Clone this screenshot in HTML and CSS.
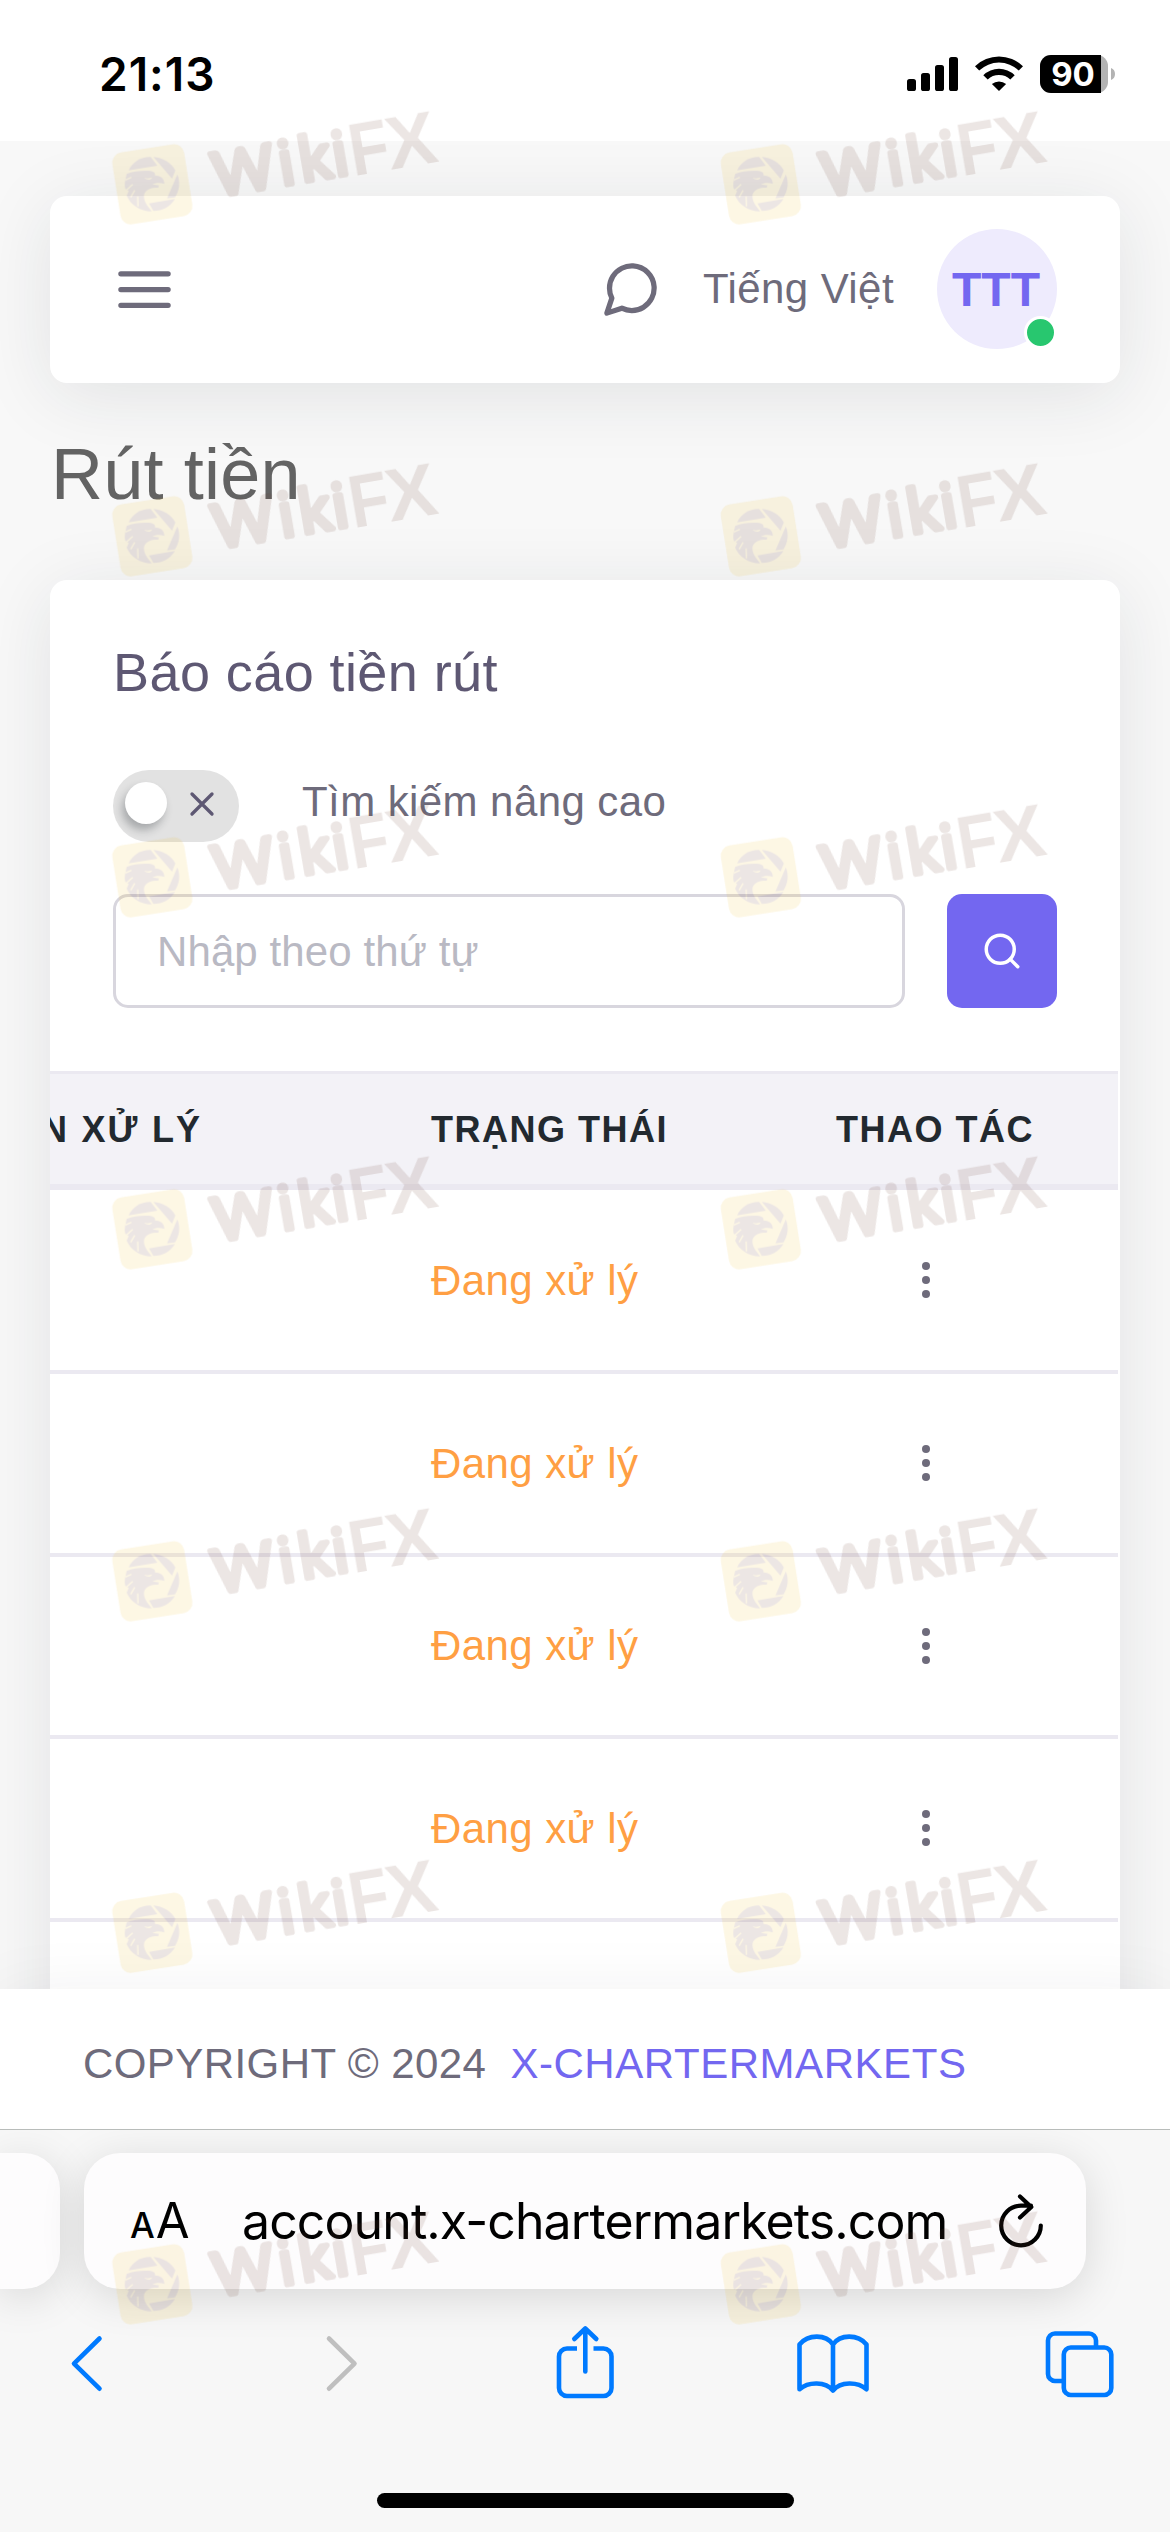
FILE: index.html
```html
<!DOCTYPE html>
<html lang="vi">
<head>
<meta charset="utf-8">
<title>Rút tiền</title>
<link rel="stylesheet" href="styles.css">
</head>
<body>
<header class="statusbar">
  <span class="clock">21:13</span>
  <svg class="status-icons" viewBox="900 50 220 48">
    <rect x="907" y="79" width="9" height="12" rx="2.6"/>
    <rect x="921" y="73" width="9" height="18" rx="2.6"/>
    <rect x="935" y="65" width="9" height="26" rx="2.6"/>
    <rect x="949" y="57" width="9" height="34" rx="2.6"/>
    <path d="M975 66.300a34.500 34.500 0 0 1 48 0l-4.200 4.300a28.500 28.500 0 0 0-39.600 0zM983.300 75.200a22.500 22.500 0 0 1 31.400 0l-4.400 4.300a16.500 16.500 0 0 0-22.600 0zM991.900 84a11 11 0 0 1 14.200 0L999 91z"/>
    <rect x="1040" y="55" width="68" height="38" rx="11" fill="#b3b3b3"/>
    <path d="M1051 55h50v38h-50a11 11 0 0 1-11-11V66a11 11 0 0 1 11-11z"/>
    <path d="M1111 68a6.500 6.500 0 0 1 0 12z" fill="#b3b3b3"/>
    <text class="battery-level" x="1073" y="86" text-anchor="middle">90</text>
  </svg>
</header>

<main class="page">
  <nav class="navbar">
    <svg class="icon-nav" viewBox="0 0 24 24"><path d="M3 12h18M3 6h18M3 18h18"/></svg>
    <div class="nav-right">
      <svg class="icon-nav" viewBox="0 0 24 24"><path d="M21 11.500a8.380 8.380 0 0 1-.9 3.800 8.500 8.500 0 0 1-7.600 4.700 8.380 8.380 0 0 1-3.800-.9L3 21l1.900-5.700a8.380 8.380 0 0 1-.9-3.800 8.500 8.500 0 0 1 4.700-7.600 8.380 8.380 0 0 1 3.800-.9h.5a8.480 8.480 0 0 1 8 8v.5z"/></svg>
      <span class="language">Tiếng Việt</span>
      <div class="avatar">TTT<i class="online"></i></div>
    </div>
  </nav>

  <h1 class="page-title">Rút tiền</h1>

  <section class="card">
    <h2 class="card-title">Báo cáo tiền rút</h2>
    <div class="advanced">
      <div class="switch">
        <i class="knob"></i>
        <svg class="icon-x" viewBox="0 0 24 24"><path d="M18 6L6 18M6 6l12 12"/></svg>
      </div>
      <span class="switch-label">Tìm kiếm nâng cao</span>
    </div>
    <div class="search">
      <input class="search-input" type="text" placeholder="Nhập theo thứ tự">
      <button class="search-button"><svg class="icon-search" viewBox="0 0 24 24"><circle cx="11" cy="11" r="8"/><path d="M21 21l-4.350-4.350"/></svg></button>
    </div>
    <div class="table">
      <div class="row head"><span class="cut">N XỬ LÝ</span><span>TRẠNG THÁI</span><span>THAO TÁC</span></div>
      <div class="row first"><span></span><span>Đang xử lý</span><svg class="icon-more" viewBox="0 0 24 24"><circle cx="12" cy="5" r="2"/><circle cx="12" cy="12" r="2"/><circle cx="12" cy="19" r="2"/></svg></div>
      <div class="row"><span></span><span>Đang xử lý</span><svg class="icon-more" viewBox="0 0 24 24"><circle cx="12" cy="5" r="2"/><circle cx="12" cy="12" r="2"/><circle cx="12" cy="19" r="2"/></svg></div>
      <div class="row"><span></span><span>Đang xử lý</span><svg class="icon-more" viewBox="0 0 24 24"><circle cx="12" cy="5" r="2"/><circle cx="12" cy="12" r="2"/><circle cx="12" cy="19" r="2"/></svg></div>
      <div class="row"><span></span><span>Đang xử lý</span><svg class="icon-more" viewBox="0 0 24 24"><circle cx="12" cy="5" r="2"/><circle cx="12" cy="12" r="2"/><circle cx="12" cy="19" r="2"/></svg></div>
    </div>
  </section>
</main>

<footer class="footer"><span>COPYRIGHT © 2024</span><a class="brand">X-CHARTERMARKETS</a></footer>

<div class="browser">
  <div class="tabs">
    <div class="tab-prev"></div>
    <div class="address">
      <span class="aa"><small>A</small>A</span>
      <span class="url">account.x-chartermarkets.com</span>
      <svg class="icon-reload" viewBox="994 2188 52 62"><path d="M1039.800 2223.500a19.800 19.800 0 1 1-19.800-19.800h10M1019 2194.500l11.300 10.500-11.300 10.500"/></svg>
    </div>
  </div>
  <div class="toolbar">
    <svg class="tool" viewBox="46 2322 80 80"><path d="M99.500 2338.500L74 2363.700l25.500 25"/></svg>
    <svg class="tool disabled" viewBox="294.500 2322 80 80"><path d="M328.500 2338.500l25.500 25.200-25.500 25"/></svg>
    <svg class="tool" viewBox="543 2322 80 80"><path d="M585.300 2371.500V2329M574.300 2339l11-10.500 11 10.500"/><path stroke-linecap="butt" d="M577 2348.500h-10a8 8 0 0 0-8 8v31.500a8 8 0 0 0 8 8h36.500a8 8 0 0 0 8-8v-31.500a8 8 0 0 0-8-8h-10"/></svg>
    <svg class="tool" viewBox="791.500 2322 80 80"><path d="M832.500 2344.500c-7-10.500-25-10.500-33.500 0V2389.300c9-8 26-8 33.500 1.200c7.500-9.200 24.500-9.200 33.500-1.200V2344.500c-8.500-10.500-26.500-10.500-33.500 0v46"/></svg>
    <svg class="tool" viewBox="1040 2322 80 80"><rect x="1063.800" y="2347.500" width="47.500" height="47.500" rx="7"/><path stroke-linecap="butt" d="M1096 2347v-6.500a7 7 0 0 0-7-7h-34a7 7 0 0 0-7 7v33.500a7 7 0 0 0 7 7h8"/></svg>
  </div>
  <div class="home"></div>
</div>

<svg class="watermarks" viewBox="0 0 1170 2532">
  <defs>
    <g id="mark" transform="scale(.33333)">
      <rect x="48" y="195" width="218" height="218" rx="31" fill="#f0c130" transform="rotate(-9 157 304)"/>
      <g fill="#6d3f30">
        <path d="M86 262C98 236 124 221 152 222L172 248z"/>
        <path d="M160 222C188 224 212 238 226 262L216 287z"/>
        <path d="M232 274C242 298 238 322 225 343L201 346z"/>
        <path d="M147 361L225 348C210 372 188 384 160 384z"/>
        <path d="M80 273C100 264 130 262 152 264C162 266 166 270 165 277C180 277 193 285 193 303C180 297 165 300 157 304L178 307C173 310 179 313 172 314C154 314 137 318 132 336C130 356 142 368 155 385C120 385 92 366 80 338L86 324L76 318C72 304 76 292 80 273zM132 284C140 292 152 292 157 283L143 286z"/>
      </g>
      <path d="M76 291L94 283M78 322L98 304M92 343L104 322M114 370L113 340" stroke="#f0c130" stroke-width="4" fill="none"/>
      <g transform="translate(378 344) rotate(-9.700)" fill="#6d3f30" class="mark-text">
        <text class="mark-soft" stroke="#6d3f30" y="-8" x="-28 172 233 335"><tspan class="mark-w">W</tspan>iki</text>
        <text class="mark-bold" x="388" textLength="119" lengthAdjust="spacingAndGlyphs">F</text>
        <text class="mark-bold" x="501">X</text>
      </g>
    </g>
  </defs>
  <g opacity=".13">
    <use href="#mark" x="100" y="83"/><use href="#mark" x="708.500" y="83"/>
    <use href="#mark" x="100" y="435"/><use href="#mark" x="708.500" y="435"/>
    <use href="#mark" x="100" y="776"/><use href="#mark" x="708.500" y="776"/>
    <use href="#mark" x="100" y="1128"/><use href="#mark" x="708.500" y="1128"/>
    <use href="#mark" x="100" y="1480"/><use href="#mark" x="708.500" y="1480"/>
    <use href="#mark" x="100" y="1831.500"/><use href="#mark" x="708.500" y="1831.500"/>
    <use href="#mark" x="100" y="2183"/><use href="#mark" x="708.500" y="2183"/>
  </g>
</svg>
</body>
</html>
```
FILE: styles.css
```css
* { box-sizing: border-box; }
body {
  margin: 0;
  width: 1170px;
  height: 2532px;
  overflow: hidden;
  position: relative;
  display: flex;
  flex-direction: column;
  background: #f8f8f8;
  font-family: "Liberation Sans", Arial, sans-serif;
  font-size: 42px;
  letter-spacing: .42px;
  color: #6e6b7b;
}
svg { flex: none; display: block; }

.statusbar {
  position: relative;
  z-index: 2;
  height: 141px;
  flex: none;
  display: flex;
  justify-content: space-between;
  align-items: flex-start;
  padding: 50px 50px 0 99px;
  background: #fff;
}
.clock {
  font: 600 46px/48px Inter, sans-serif;
  letter-spacing: 1px;
  color: #000;
}
.status-icons { width: 220px; height: 48px; }
.battery-level { font: 700 33px Inter, sans-serif; letter-spacing: 0; fill: #fff; }

.page {
  height: 1848px;
  flex: none;
  padding: 55px 50px 0;
  overflow: hidden;
}
.navbar {
  height: 187px;
  display: flex;
  align-items: center;
  justify-content: space-between;
  padding: 0 63px;
  background: #fff;
  border-radius: 17px;
  box-shadow: 0 12px 72px rgba(34, 41, 47, .1);
}
.icon-nav {
  width: 63px;
  height: 63px;
  fill: none;
  stroke: #6e6b7b;
  stroke-width: 2;
  stroke-linecap: round;
  stroke-linejoin: round;
}
.nav-right { display: flex; align-items: center; }
.language { margin: 0 43px 2px 41px; line-height: 60px; }
.avatar {
  position: relative;
  width: 120px;
  height: 120px;
  margin-bottom: 1px;
  border-radius: 50%;
  background: #eeebfd;
  color: #7367f0;
  font-size: 48px;
  font-weight: 700;
  line-height: 121px;
  letter-spacing: 0;
  text-align: center;
  padding-right: 2px;
}
.online {
  position: absolute;
  right: 0;
  bottom: 0;
  width: 33px;
  height: 33px;
  border: 3px solid #fff;
  border-radius: 50%;
  background: #28c76f;
}

.page-title {
  margin: 48px 0 63px 1px;
  font-size: 72px;
  font-weight: 400;
  line-height: 86px;
  letter-spacing: .2px;
  color: #636363;
}

.card {
  height: 1600px;
  padding-top: 60px;
  background: #fff;
  border-radius: 17px;
  box-shadow: 0 12px 72px rgba(34, 41, 47, .1);
}
.card-title {
  margin: 0 63px 66px;
  font-size: 54px;
  font-weight: 400;
  line-height: 64px;
  color: #5e5873;
}
.advanced { display: flex; gap: 63px; margin: 0 63px 52px; }
.switch {
  width: 126px;
  height: 72px;
  border-radius: 36px;
  background: #e2e2e2;
  display: flex;
  align-items: flex-start;
  padding: 12px;
}
.knob {
  width: 42px;
  height: 42px;
  border-radius: 50%;
  background: #fff;
  box-shadow: -3px 6px 9px rgba(34, 41, 47, .3);
}
.icon-x {
  width: 40px;
  height: 40px;
  margin: 2px 0 0 15px;
  stroke: #5e5873;
  stroke-width: 2;
  stroke-linecap: round;
}
.switch-label { line-height: 63px; }
.search { display: flex; gap: 42px; margin: 0 63px 63px; }
.search-input {
  width: 792px;
  height: 114px;
  padding: 1px 41px 0;
  border: 3px solid #d8d6de;
  border-radius: 15px;
  background: #fff;
  font: inherit;
  letter-spacing: .1px;
}
.search-input::placeholder { color: #b9b9c3; opacity: 1; }
.search-button {
  width: 110px;
  height: 114px;
  padding: 0;
  border: 0;
  border-radius: 15px;
  background: #7367f0;
  display: flex;
  align-items: center;
  justify-content: center;
}
.icon-search {
  width: 42px;
  height: 42px;
  fill: none;
  stroke: #fff;
  stroke-width: 2;
  stroke-linecap: round;
}

.table { width: 1068px; overflow: hidden; color: #ff9f43; }
.row {
  height: 182.500px;
  display: grid;
  grid-template-columns: 381px 405px 1fr;
  align-items: center;
  border-bottom: 4px solid #ebe9f1;
}
.row > span { padding-top: 1px; }
.row.first { height: 184px; }
.row.head {
  height: 119px;
  border-top: 3px solid #ebe9f1;
  border-bottom: 6px solid #ebe9f1;
  background: #f3f2f7;
  color: #22292f;
  font-size: 36px;
  font-weight: 700;
  letter-spacing: 1.500px;
}
.row > .cut { margin-left: -9px; letter-spacing: 2.200px; }
.icon-more { width: 48px; height: 48px; margin-left: 66px; fill: #6e6b7b; }

.footer {
  position: relative;
  height: 140px;
  flex: none;
  display: flex;
  gap: 24px;
  padding-left: 83px;
  line-height: 149px;
  background: #fff;
  box-shadow: 0 12px 72px rgba(34, 41, 47, .08);
}
.brand { color: #7367f0; letter-spacing: .55px; }

.browser {
  position: relative;
  height: 403px;
  flex: none;
  border-top: 1px solid #b8bcba;
  background: #f7f7f7;
  letter-spacing: 0;
  overflow: hidden;
}
.tabs { display: flex; gap: 24px; padding-top: 23px; }
.tab-prev, .address {
  height: 136px;
  background: #fdfcfd;
  box-shadow: 0 8px 44px rgba(0, 0, 0, .13);
}
.tab-prev { width: 60px; border-radius: 0 36px 36px 0; }
.address {
  width: 1002px;
  border-radius: 36px;
  display: flex;
  align-items: center;
  padding-left: 46px;
  font-family: Inter, sans-serif;
  color: #000;
}
.aa { width: 112px; font-size: 49px; line-height: 136px; white-space: nowrap; letter-spacing: -1px; padding-top: 3px; }
.aa small { font-size: 35px; font-weight: 500; margin-right: 2px; }
.url { width: 752px; font-size: 50px; letter-spacing: -.9px; white-space: nowrap; }
.icon-reload {
  width: 52px;
  height: 62px;
  margin-left: 1px;
  fill: none;
  stroke: #000;
  stroke-width: 4.200;
  stroke-linecap: round;
  stroke-linejoin: round;
}
.toolbar {
  display: flex;
  justify-content: space-between;
  padding: 33px 50px 0 46px;
}
.tool {
  width: 80px;
  height: 80px;
  fill: none;
  stroke: #007aff;
  stroke-width: 4.600;
  stroke-linecap: round;
  stroke-linejoin: round;
}
.disabled { stroke: #bfbfbf; }
.home {
  width: 417px;
  height: 15px;
  margin: 91px 0 0 377px;
  border-radius: 8px;
  background: #000;
}

.watermarks {
  position: absolute;
  left: 0;
  top: 0;
  z-index: 5;
  width: 1170px;
  height: 2532px;
  pointer-events: none;
}
.mark-text { letter-spacing: 0; }
.mark-soft { font: 400 182px "Open Sans", sans-serif; stroke-width: 17; stroke-linejoin: round; }
.mark-w { font-family: Lato, sans-serif; font-size: 179px; }
.mark-bold { font: 700 225px "Liberation Sans", sans-serif; }
```
